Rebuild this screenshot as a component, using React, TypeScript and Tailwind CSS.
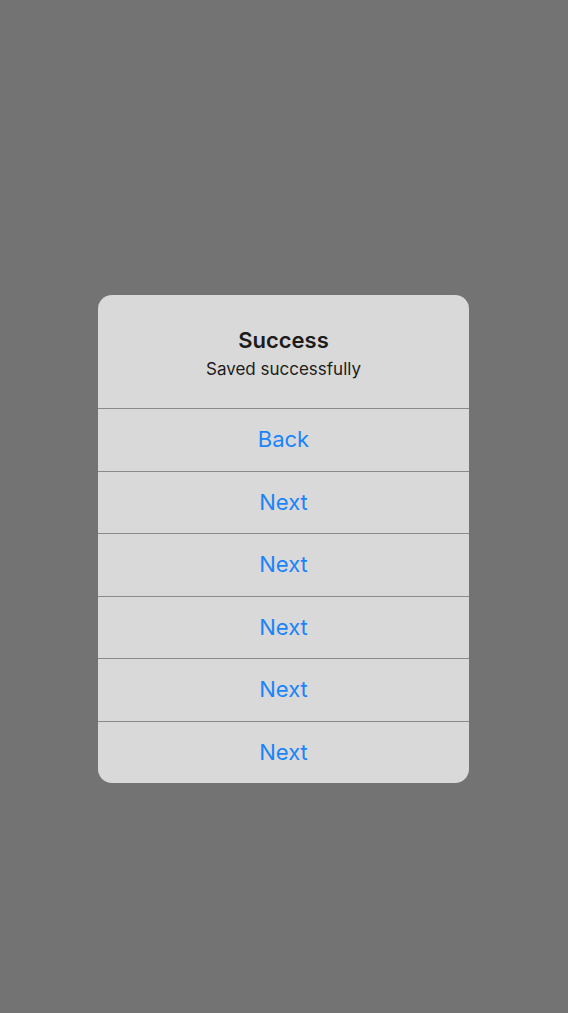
export default function App() {
  const buttons = ['Back', 'Next', 'Next', 'Next', 'Next', 'Next']

  return (
    <div
      className="w-[568px] h-[1013px] bg-[#737373] flex pl-[98px] pt-[295px]"
      style={{ fontFamily: 'Inter, "Noto Sans", sans-serif' }}
    >
      <div className="w-[371px] h-[488px] bg-[#d9d9d9] rounded-[14px] overflow-hidden flex flex-col">
        {/* Header */}
        <div className="h-[113px] flex flex-col items-center pt-[30px]">
          <div className="text-[22px] leading-[30px] font-semibold text-[#1c1c1c]">Success</div>
          <div className="mt-[3px] text-[17px] leading-[22px] text-[#1c1c1c]">Saved successfully</div>
        </div>

        {/* Actions */}
        {buttons.map((label, i) => (
          <button
            key={i}
            className="h-[62.5px] w-full border-t border-[#8a8a8a] flex items-center justify-center text-[22px] text-[#1a84fb]"
          >
            {label}
          </button>
        ))}
      </div>
    </div>
  )
}
